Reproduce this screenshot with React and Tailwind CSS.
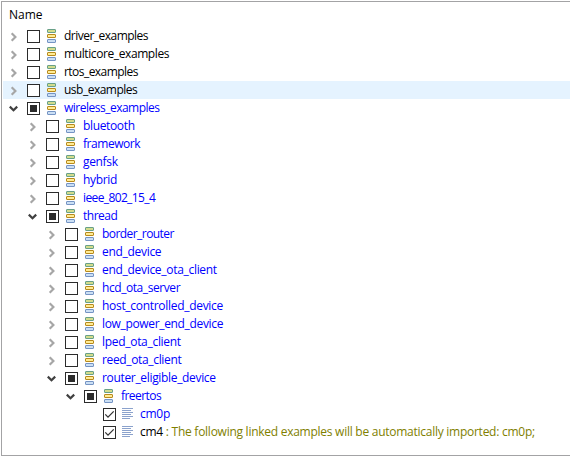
const rows = [
  { depth: 0, label: "driver_examples", state: "closed", plain: true, track: "tracking-[-0.52px]" },
  { depth: 0, label: "multicore_examples", state: "closed", plain: true, track: "tracking-[-0.4px]" },
  { depth: 0, label: "rtos_examples", state: "closed", plain: true, track: "tracking-[-0.54px]" },
  { depth: 0, label: "usb_examples", state: "closed", plain: true, hover: true, track: "tracking-[-0.5px]" },
  { depth: 0, label: "wireless_examples", state: "open", track: "tracking-[-0.5px]" },
  { depth: 1, label: "bluetooth", state: "closed", track: "tracking-[-0.35px]" },
  { depth: 1, label: "framework", state: "closed", track: "tracking-[-0.45px]" },
  { depth: 1, label: "genfsk", state: "closed", track: "tracking-[-0.33px]" },
  { depth: 1, label: "hybrid", state: "closed", track: "tracking-[-0.33px]" },
  { depth: 1, label: "ieee_802_15_4", state: "closed", track: "tracking-[-0.62px]" },
  { depth: 1, label: "thread", state: "open", track: "tracking-[-0.5px]" },
  { depth: 2, label: "border_router", state: "closed", track: "tracking-[-0.56px]" },
  { depth: 2, label: "end_device", state: "closed", track: "tracking-[-0.3px]" },
  { depth: 2, label: "end_device_ota_client", state: "closed", track: "tracking-[-0.3px]" },
  { depth: 2, label: "hcd_ota_server", state: "closed", track: "tracking-[-0.43px]" },
  { depth: 2, label: "host_controlled_device", state: "closed", track: "tracking-[-0.3px]" },
  { depth: 2, label: "low_power_end_device", state: "closed", track: "tracking-[-0.34px]" },
  { depth: 2, label: "lped_ota_client", state: "closed", track: "tracking-[-0.3px]" },
  { depth: 2, label: "reed_ota_client", state: "closed", track: "tracking-[-0.35px]" },
  { depth: 2, label: "router_eligible_device", state: "open", track: "tracking-[-0.33px]" },
  { depth: 3, label: "freertos", state: "open", track: "tracking-[-0.55px]" },
  { depth: 4, label: "cm0p", state: "leaf", track: "tracking-[-0.25px]" },
  {
    depth: 4,
    label: "cm4",
    state: "leaf",
    plain: true,
    track: "tracking-[-0.3px]",
    note: ": The following linked examples will be automatically imported: cm0p;",
  },
];

const indents = ["pl-1.5", "pl-[25px]", "pl-11", "pl-[63px]", "pl-[82px]"];

function Chevron({ state }) {
  return (
    <svg className="h-[18px] w-3.5 shrink-0" viewBox="0 0 14 18" fill="none" strokeWidth="2.2">
      {state === "closed" && <path d="M2.7 6.3 6.4 10 2.7 13.7" stroke="#a6a6a6" />}
      {state === "open" && <path d="M.8 7.6 4.5 11.2 8.2 7.6" stroke="#404040" />}
    </svg>
  );
}

function Checkbox({ state }) {
  return (
    <svg className="mt-[3px] ml-1 h-[13px] w-[13px] shrink-0" viewBox="0 0 13 13">
      <rect x="0.5" y="0.5" width="12" height="12" fill="#fff" stroke="#2b2b2b" />
      {state === "open" && <rect x="3" y="3" width="7" height="7" fill="#2b2b2b" />}
      {state === "leaf" && <path d="M2.3 6.4 5 9.1 10.7 3.4" fill="none" stroke="#333" strokeWidth="1.3" />}
    </svg>
  );
}

function StackIcon() {
  return (
    <svg className="mt-0.5 ml-[7px] h-[14px] w-[9px] shrink-0" viewBox="0 0 9 14">
      <rect x="0.5" y="0.5" width="8" height="3" rx="0.4" fill="#d2dc8c" stroke="#68a088" />
      <rect x="0.5" y="5.5" width="8" height="3" rx="0.4" fill="#ffec96" stroke="#b88a1c" />
      <rect x="0.5" y="10.5" width="8" height="3" rx="0.4" fill="#cbdff4" stroke="#7594c4" />
    </svg>
  );
}

function LinesIcon() {
  return (
    <svg className="mt-[3px] ml-1.5 h-[11px] w-[11px] shrink-0" viewBox="0 0 11 11" stroke="#8ba2cc">
      <path d="M0 .5h11M0 2.5h9M0 4.5h11M0 6.5h9M0 8.5h11M0 10.5h8" />
    </svg>
  );
}

export default function App() {
  return (
    <div className="h-[456px] w-[570px] overflow-hidden bg-white pt-px pl-px font-['Open_Sans','Noto_Sans',sans-serif] text-[12px] leading-[18px] whitespace-pre">
      <div className="h-[455px] border-y border-l border-[#a3a3a5] pl-px">
        <div className="h-[25px] pt-[4px] pl-[6px] text-black">Name</div>
        {rows.map((row) => (
          <div
            key={row.label}
            className={`flex h-[18px] items-start ${indents[row.depth]} ${row.hover ? "bg-[#e5f3ff]" : ""}`}
          >
            <Chevron state={row.state} />
            <Checkbox state={row.state} />
            {row.state === "leaf" ? <LinesIcon /> : <StackIcon />}
            <span
              className={`${row.track} ${row.state === "leaf" ? "ml-[7px]" : "ml-2"} ${row.plain ? "text-black" : "text-[#0000ff]"}`}
            >
              {row.label}
            </span>
            {row.note && <span className="ml-[3px] tracking-[-0.26px] text-[#808000]">{row.note}</span>}
          </div>
        ))}
      </div>
    </div>
  );
}
